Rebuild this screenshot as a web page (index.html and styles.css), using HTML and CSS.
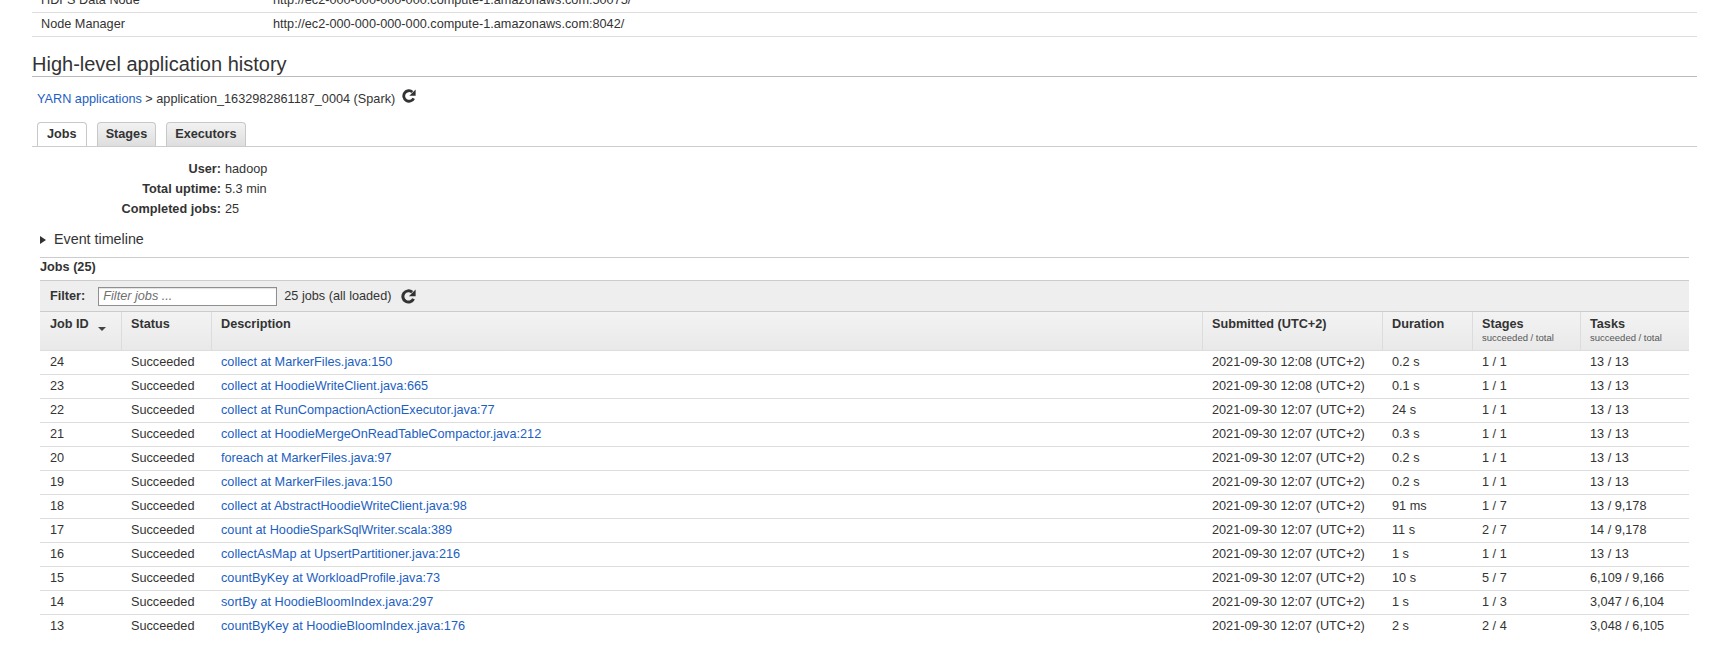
FILE: index.html
```html
<!DOCTYPE html>
<html lang="en">
<head>
<meta charset="utf-8">
<title>High-level application history</title>
<link rel="stylesheet" href="styles.css">
</head>
<body>
<div class="page">
  <div class="info">
    <div class="info-row"><div>HDFS Data Node</div><div>http://ec2-000-000-000-000.compute-1.amazonaws.com:50075/</div></div>
    <div class="info-row"><div>Node Manager</div><div>http://ec2-000-000-000-000.compute-1.amazonaws.com:8042/</div></div>
  </div>

  <h2 class="section-title">High-level application history</h2>

  <div class="crumbs">
    <a href="#" class="link">YARN applications</a> &gt; application_1632982861187_0004 (Spark)
    <svg class="refresh refresh-sm" viewBox="0 0 16 16" aria-hidden="true"><path d="M13.4 10.6 A6 6 0 1 1 11.9 3.4" fill="none" stroke="#333" stroke-width="3.2"/><path d="M15.6 0.6 V7.8 H8.4 Z" fill="#333"/></svg>
  </div>

  <ul class="tabs">
    <li class="tab tab-jobs active">Jobs</li>
    <li class="tab">Stages</li>
    <li class="tab">Executors</li>
  </ul>

  <div class="content">
    <div class="summary">
      <div class="label">User:</div><div>hadoop</div>
      <div class="label">Total uptime:</div><div>5.3 min</div>
      <div class="label">Completed jobs:</div><div>25</div>
    </div>

    <div class="timeline"><span class="tri"></span>Event timeline</div>

    <div class="jobs-title">Jobs (25)</div>

    <div class="jobs">
      <div class="filter-bar">
        <span class="filter-label">Filter:</span>
        <input class="filter-input" type="text" placeholder="Filter jobs ...">
        <span class="filter-count">25 jobs (all loaded)</span>
        <svg class="refresh refresh-md" viewBox="0 0 16 16" aria-hidden="true"><path d="M13.4 10.6 A6 6 0 1 1 11.9 3.4" fill="none" stroke="#333" stroke-width="3.2"/><path d="M15.6 0.6 V7.8 H8.4 Z" fill="#333"/></svg>
      </div>
      <table class="jobs-table">
        <colgroup>
          <col class="c-id"><col class="c-status"><col class="c-desc"><col class="c-sub"><col class="c-dur"><col class="c-stages"><col class="c-tasks">
        </colgroup>
        <thead>
          <tr>
            <th>Job ID<span class="caret"></span></th>
            <th>Status</th>
            <th>Description</th>
            <th>Submitted (UTC+2)</th>
            <th>Duration</th>
            <th>Stages<span class="sub">succeeded / total</span></th>
            <th>Tasks<span class="sub">succeeded / total</span></th>
          </tr>
        </thead>
        <tbody>
          <tr><td>24</td><td>Succeeded</td><td><a href="#" class="link">collect at MarkerFiles.java:150</a></td><td>2021-09-30 12:08 (UTC+2)</td><td>0.2 s</td><td>1 / 1</td><td>13 / 13</td></tr>
          <tr><td>23</td><td>Succeeded</td><td><a href="#" class="link">collect at HoodieWriteClient.java:665</a></td><td>2021-09-30 12:08 (UTC+2)</td><td>0.1 s</td><td>1 / 1</td><td>13 / 13</td></tr>
          <tr><td>22</td><td>Succeeded</td><td><a href="#" class="link">collect at RunCompactionActionExecutor.java:77</a></td><td>2021-09-30 12:07 (UTC+2)</td><td>24 s</td><td>1 / 1</td><td>13 / 13</td></tr>
          <tr><td>21</td><td>Succeeded</td><td><a href="#" class="link">collect at HoodieMergeOnReadTableCompactor.java:212</a></td><td>2021-09-30 12:07 (UTC+2)</td><td>0.3 s</td><td>1 / 1</td><td>13 / 13</td></tr>
          <tr><td>20</td><td>Succeeded</td><td><a href="#" class="link">foreach at MarkerFiles.java:97</a></td><td>2021-09-30 12:07 (UTC+2)</td><td>0.2 s</td><td>1 / 1</td><td>13 / 13</td></tr>
          <tr><td>19</td><td>Succeeded</td><td><a href="#" class="link">collect at MarkerFiles.java:150</a></td><td>2021-09-30 12:07 (UTC+2)</td><td>0.2 s</td><td>1 / 1</td><td>13 / 13</td></tr>
          <tr><td>18</td><td>Succeeded</td><td><a href="#" class="link">collect at AbstractHoodieWriteClient.java:98</a></td><td>2021-09-30 12:07 (UTC+2)</td><td>91 ms</td><td>1 / 7</td><td>13 / 9,178</td></tr>
          <tr><td>17</td><td>Succeeded</td><td><a href="#" class="link">count at HoodieSparkSqlWriter.scala:389</a></td><td>2021-09-30 12:07 (UTC+2)</td><td>11 s</td><td>2 / 7</td><td>14 / 9,178</td></tr>
          <tr><td>16</td><td>Succeeded</td><td><a href="#" class="link">collectAsMap at UpsertPartitioner.java:216</a></td><td>2021-09-30 12:07 (UTC+2)</td><td>1 s</td><td>1 / 1</td><td>13 / 13</td></tr>
          <tr><td>15</td><td>Succeeded</td><td><a href="#" class="link">countByKey at WorkloadProfile.java:73</a></td><td>2021-09-30 12:07 (UTC+2)</td><td>10 s</td><td>5 / 7</td><td>6,109 / 9,166</td></tr>
          <tr><td>14</td><td>Succeeded</td><td><a href="#" class="link">sortBy at HoodieBloomIndex.java:297</a></td><td>2021-09-30 12:07 (UTC+2)</td><td>1 s</td><td>1 / 3</td><td>3,047 / 6,104</td></tr>
          <tr><td>13</td><td>Succeeded</td><td><a href="#" class="link">countByKey at HoodieBloomIndex.java:176</a></td><td>2021-09-30 12:07 (UTC+2)</td><td>2 s</td><td>2 / 4</td><td>3,048 / 6,105</td></tr>
        </tbody>
      </table>
    </div>
  </div>
</div>
</body>
</html>
```

FILE: styles.css
```css
html, body {
  margin: 0;
  padding: 0;
  background: #ffffff;
}

body {
  font-family: "Liberation Sans", Arial, Helvetica, sans-serif;
  font-size: 12.7px;
  color: #333333;
  overflow: hidden;
}

.page {
  width: 1665px;
  margin: -11px 0 0 32px;
}

.link {
  color: #1c60c2;
  text-decoration: none;
}

/* top info table */
.info-row {
  display: grid;
  grid-template-columns: 232px 1fr;
  line-height: 23px;
  border-bottom: 1px solid #dddddd;
}

.info-row > div {
  padding-left: 9px;
  white-space: nowrap;
}

/* section heading */
.section-title {
  margin: 15px 0 0;
  font-size: 20px;
  font-weight: normal;
  line-height: 24px;
  color: #333333;
  border-bottom: 1px solid #bbbbbb;
}

/* breadcrumb */
.crumbs {
  margin-top: 12px;
  padding-left: 5px;
  line-height: 20px;
  white-space: nowrap;
}

.refresh {
  display: inline-block;
  vertical-align: baseline;
}

.refresh-sm {
  width: 14px;
  height: 14px;
  margin-left: 3px;
}

.refresh-md {
  width: 15px;
  height: 15px;
  margin-left: 10px;
}

/* tabs */
.tabs {
  list-style: none;
  margin: 13px 0 0;
  padding: 0 0 0 5px;
  display: flex;
  gap: 10px;
  border-bottom: 1px solid #cccccc;
}

.tab {
  height: 23px;
  line-height: 23px;
  padding: 0 8px;
  font-weight: bold;
  color: #333333;
  border: 1px solid #c8c8c8;
  border-bottom: none;
  border-radius: 4px 4px 0 0;
  background: linear-gradient(#f2f2f2, #dedede);
}

.tab-jobs {
  padding: 0 9px;
}

.tab.active {
  background: #ffffff;
}

/* content area */
.content {
  padding: 0 8px;
}

.summary {
  margin-top: 12px;
  display: grid;
  grid-template-columns: 181px 1fr;
  column-gap: 4px;
  line-height: 20px;
}

.summary .label {
  text-align: right;
  font-weight: bold;
}

.timeline {
  margin-top: 10px;
  line-height: 20px;
  padding-bottom: 8px;
  font-size: 14.3px;
  border-bottom: 1px solid #cccccc;
}

.tri {
  display: inline-block;
  width: 0;
  height: 0;
  border-left: 6px solid #333333;
  border-top: 4.5px solid transparent;
  border-bottom: 4.5px solid transparent;
  margin-right: 8px;
  vertical-align: 0;
}

.jobs-title {
  line-height: 18px;
  font-weight: bold;
  margin-bottom: 4px;
}

.jobs {
  border-top: 1px solid #cccccc;
}

.filter-bar {
  height: 30px;
  display: flex;
  align-items: center;
  padding-left: 10px;
  background: #eeeeee;
  border-bottom: 1px solid #cccccc;
}

.filter-label {
  font-weight: bold;
}

.filter-input {
  box-sizing: border-box;
  width: 179px;
  height: 19px;
  margin: 0 0 0 13px;
  padding: 0 4px;
  font-family: "Liberation Sans", Arial, Helvetica, sans-serif;
  font-size: 12.7px;
  color: #333333;
  border: 1px solid #8f8f8f;
  border-radius: 0;
  background: #ffffff;
  box-shadow: inset 0 1px 1px rgba(0, 0, 0, 0.12);
}

.filter-input::placeholder {
  color: #6f6f6f;
  font-style: italic;
}

.filter-count {
  margin-left: 7px;
}

.filter-bar .refresh-md {
  vertical-align: middle;
}

/* jobs table */
.jobs-table {
  width: 1649px;
  table-layout: fixed;
  border-collapse: separate;
  border-spacing: 0;
}

.c-id { width: 81px; }
.c-status { width: 90px; }
.c-desc { width: 991px; }
.c-sub { width: 180px; }
.c-dur { width: 90px; }
.c-stages { width: 108px; }
.c-tasks { width: 109px; }

.jobs-table th {
  text-align: left;
  vertical-align: top;
  font-weight: bold;
  line-height: 16px;
  padding: 4px 9px 18px;
  border-left: 1px solid #dcdcdc;
  background: linear-gradient(#f3f3f3, #e9e9e9);
  white-space: nowrap;
}

.jobs-table th:first-child {
  border-left: none;
  padding-left: 10px;
}

.jobs-table th .sub {
  display: block;
  font-size: 9.5px;
  font-weight: normal;
  line-height: 11px;
  color: #555555;
  margin-bottom: -11px;
}

.caret {
  display: inline-block;
  width: 0;
  height: 0;
  margin-left: 9px;
  border-top: 4.5px solid #444444;
  border-left: 4.5px solid transparent;
  border-right: 4.5px solid transparent;
  vertical-align: -3px;
}

.jobs-table td {
  padding: 2px 10px 3px;
  line-height: 18px;
  border-top: 1px solid #dddddd;
  white-space: nowrap;
  overflow: hidden;
}
```
